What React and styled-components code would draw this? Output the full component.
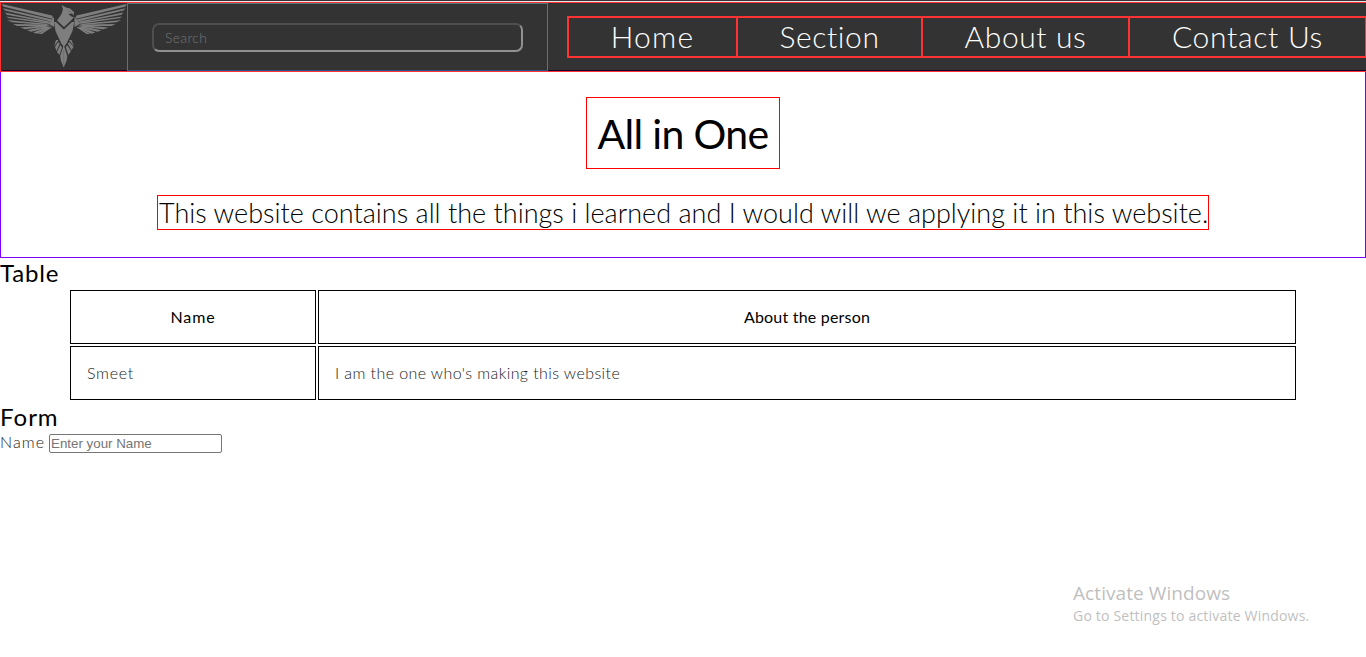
import React from 'react';
import styled, { createGlobalStyle } from 'styled-components';

const GlobalStyle = createGlobalStyle`
  * { box-sizing: border-box; }
  html, body, #root { height: 100%; }
  body { margin: 0; background: #fff; color: #000; overflow: hidden;
    font-family: Lato, "Liberation Sans", sans-serif; font-weight: 300; font-size: 16px; }
  h1, h2, p { margin: 0; }
`;

const Page = styled.div`position: relative; height: 100%;`;

const Header = styled.header`
  display: flex;
  height: 72px;
  background: #333;
  border-bottom: 1px solid #ff3333;
  box-shadow: inset 0 1px #333333, inset 0 2px #eee4ee, inset 0 3px #ff3333, inset 0 -1px #190033;
`;

const Logo = styled.div`
  width: 127px;
  height: 70px;
  margin-top: 2px;
  border: 1px solid #ff3333;
  border-right: 0;
  border-bottom: 0;
  svg { display: block; margin: -3px 0 0 -1px; }
`;

const SearchBox = styled.div`
  display: flex;
  width: 421px;
  height: 68px;
  margin-top: 3px;
  padding: 19px 24px;
  border: 1px solid #4a7c78;
  border-bottom-color: #2d5387;
`;

const SearchInput = styled.input`
  width: 371px;
  height: 29px;
  padding: 0 11px 1px;
  border: 2px solid;
  border-color: #4f4f4f #919191 #919191 #4f4f4f;
  border-radius: 7px;
  outline: 0;
  background: transparent;
  font: 300 14px Lato, sans-serif;
  letter-spacing: 0.3px;
  &::placeholder { color: #757575; opacity: 1; }
`;

const Nav = styled.nav`
  display: flex;
  height: 42px;
  margin: 16px 0 0 19px;
  border: 2px solid #ff3333;
  border-right-width: 1px;
`;

const NavLink = styled.a`
  display: flex;
  justify-content: center;
  width: ${p => p.$width}px;
  border-left: ${p => (p.$first ? 0 : 2)}px solid #ff3333;
  color: #fff;
  font-size: 30px;
  line-height: 36px;
  letter-spacing: ${p => p.$spacing}px;
  white-space: nowrap;
`;

const Hero = styled.section`
  display: flex;
  flex-direction: column;
  align-items: center;
  height: 186px;
  padding-top: 25px;
  border: 1px solid #8000ff;
  border-top: 0;
`;

const Title = styled.h1`
  width: 194px;
  height: 72px;
  border: 1px solid #ff0000;
  font-size: 41px;
  font-weight: 400;
  line-height: 71px;
  letter-spacing: -0.65px;
  text-align: center;
  white-space: nowrap;
`;

const Intro = styled.p`
  width: 1052px;
  height: 35px;
  margin-top: 26px;
  padding-left: 1px;
  border: 1px solid #ff0000;
  font-size: 27px;
  line-height: 34px;
  letter-spacing: 0.015px;
  white-space: nowrap;
`;

const Heading = styled.h2`
  height: 30px;
  font-size: 24px;
  font-weight: 400;
  line-height: 29px;
  letter-spacing: ${p => p.$spacing}px;
`;

const Table = styled.table`
  width: 1230px;
  margin: 0 68px;
  border-spacing: 2px;
  table-layout: fixed;
  th, td { height: 54px; padding: 0 16px; border: 1px solid #000; line-height: 20px; }
  th { font-weight: 400; }
  td { color: #222; }
  th:first-child { width: 246px; }
`;

const Spaced = styled.span`letter-spacing: ${p => p.$spacing}px;`;

const Field = styled.label`
  display: flex;
  align-items: center;
  gap: 4px;
  padding-top: 2px;
  height: 21px;
  color: #222;
`;

const FieldName = styled.span`
  width: 45px;
  margin-top: -4px;
  letter-spacing: 1.1px;
`;

const FieldInput = styled.input`
  width: 173px;
  height: 19px;
  padding: 1px;
  border: 1px solid #767676;
  border-radius: 2px;
  outline: 0;
  font: 13.333px "Liberation Sans", Arial, sans-serif;
  &::placeholder { color: #757575; opacity: 1; }
`;

const Watermark = styled.aside`
  position: absolute;
  left: 1073px;
  top: 580px;
  color: #bfbfbf;
  font-family: "Open Sans", "Noto Sans", sans-serif;
  font-weight: 400;
  white-space: nowrap;
`;

const WatermarkTitle = styled.div`font-size: 19px; line-height: 26px; letter-spacing: 0.08px;`;
const WatermarkText = styled.div`font-size: 14px; line-height: 20px; letter-spacing: 0.2px;`;

const Wing = () => (
  <g>
    <path d="M2 4 L52 15.5 L53.5 19 L50 18.2 L3 6.5Z" />
    <path d="M3 8.3 L52 19.4 L53 22 L5 10.6Z" />
    <path d="M5 12.5 L51 21.8 L53 23.6 L7 14.7Z" />
    <path d="M6 16.4 L47 22 L53 24.6 L9 18.3Z" />
    <path d="M7 20 L44 23.4 L52 25.4 L12 22.2Z" />
    <path d="M13 24 L44 24.5 L50 26 L17 26Z" />
    <path d="M20 27.5 L43 25.5 L51 26.3 L25 29.3Z" />
    <path d="M27 30.3 L44 26.7 L51 27 L31 31.7Z" />
    <path d="M33 32.6 L47 27.2 L52 27.4 L37 33.7Z" />
    <path d="M38 34 L49 28 L53 26.5 L42 34Z" />
    <path d="M54 17 L54 27 L49 24 L51 21Z" />
  </g>
);

const Eagle = () => (
  <svg width="128" height="70" viewBox="0 0 128 70">
    <g fill="#7e7e7e">
      <Wing />
      <g transform="translate(128.5 0) scale(-1 1)"><Wing /></g>
      <path d="M61.5 5 L66 7.5 L70 8.5 L74 12 L73.8 15.5 L72 13.5 L68.5 14 L71 16.3 L73.8 17.2 L70.5 21 L64 27 L57 20.5 L61.5 14 L63 9Z" />
      <path d="M54 22 L56 22 L63.8 29.6 L72 22 L74.3 22 L72.5 31 L66.8 43 L64 47 L61 43 L55.5 31Z" />
      <path d="M63.7 45 L67.3 56 L66.5 61 L63.7 67.5 L61 61 L60.2 56Z" />
      <path d="M60.3 45 L62 47.5 L59.5 55 L57 52Z M67.2 45 L65.8 47.5 L68.5 55 L71 51Z" />
      <path d="M58 42 L59.8 43.4 L56.5 51 L55 47Z M69.5 42 L67.8 43.4 L71.5 50 L73.5 47Z" />
      <path d="M56 40 L58.5 40 L54 46.5Z M71.5 40 L69 40 L74 46.5Z" />
    </g>
    <path d="M67.5 10.5 L71 11.5 M63.7 51 V65" stroke="#606060" strokeWidth=".5" fill="none" />
  </svg>
);

export default function App() {
  return (
    <Page>
      <GlobalStyle />
      <Header>
        <Logo><Eagle /></Logo>
        <SearchBox><SearchInput placeholder="Search" /></SearchBox>
        <Nav>
          <NavLink $first $width={167} $spacing={1.2}>Home</NavLink>
          <NavLink $width={185} $spacing={0.6}>Section</NavLink>
          <NavLink $width={207} $spacing={0.6}>About us</NavLink>
          <NavLink $width={237} $spacing={0.7}>Contact Us</NavLink>
        </Nav>
      </Header>
      <Hero>
        <Title>All in One</Title>
        <Intro>This website contains all the things i learned and I would will we applying it in this website.</Intro>
      </Hero>
      <Heading $spacing={0.8}>Table</Heading>
      <Table>
        <thead>
          <tr>
            <th><Spaced $spacing={0.9}>Name</Spaced></th>
            <th><Spaced $spacing={0.2}>About the person</Spaced></th>
          </tr>
        </thead>
        <tbody>
          <tr>
            <td><Spaced $spacing={0.7}>Smeet</Spaced></td>
            <td><Spaced $spacing={0.41}>I am the one who's making this website</Spaced></td>
          </tr>
        </tbody>
      </Table>
      <Heading $spacing={1}>Form</Heading>
      <Field>
        <FieldName>Name</FieldName>
        <FieldInput placeholder="Enter your Name" />
      </Field>
      <Watermark>
        <WatermarkTitle>Activate Windows</WatermarkTitle>
        <WatermarkText>Go to Settings to activate Windows.</WatermarkText>
      </Watermark>
    </Page>
  );
}
